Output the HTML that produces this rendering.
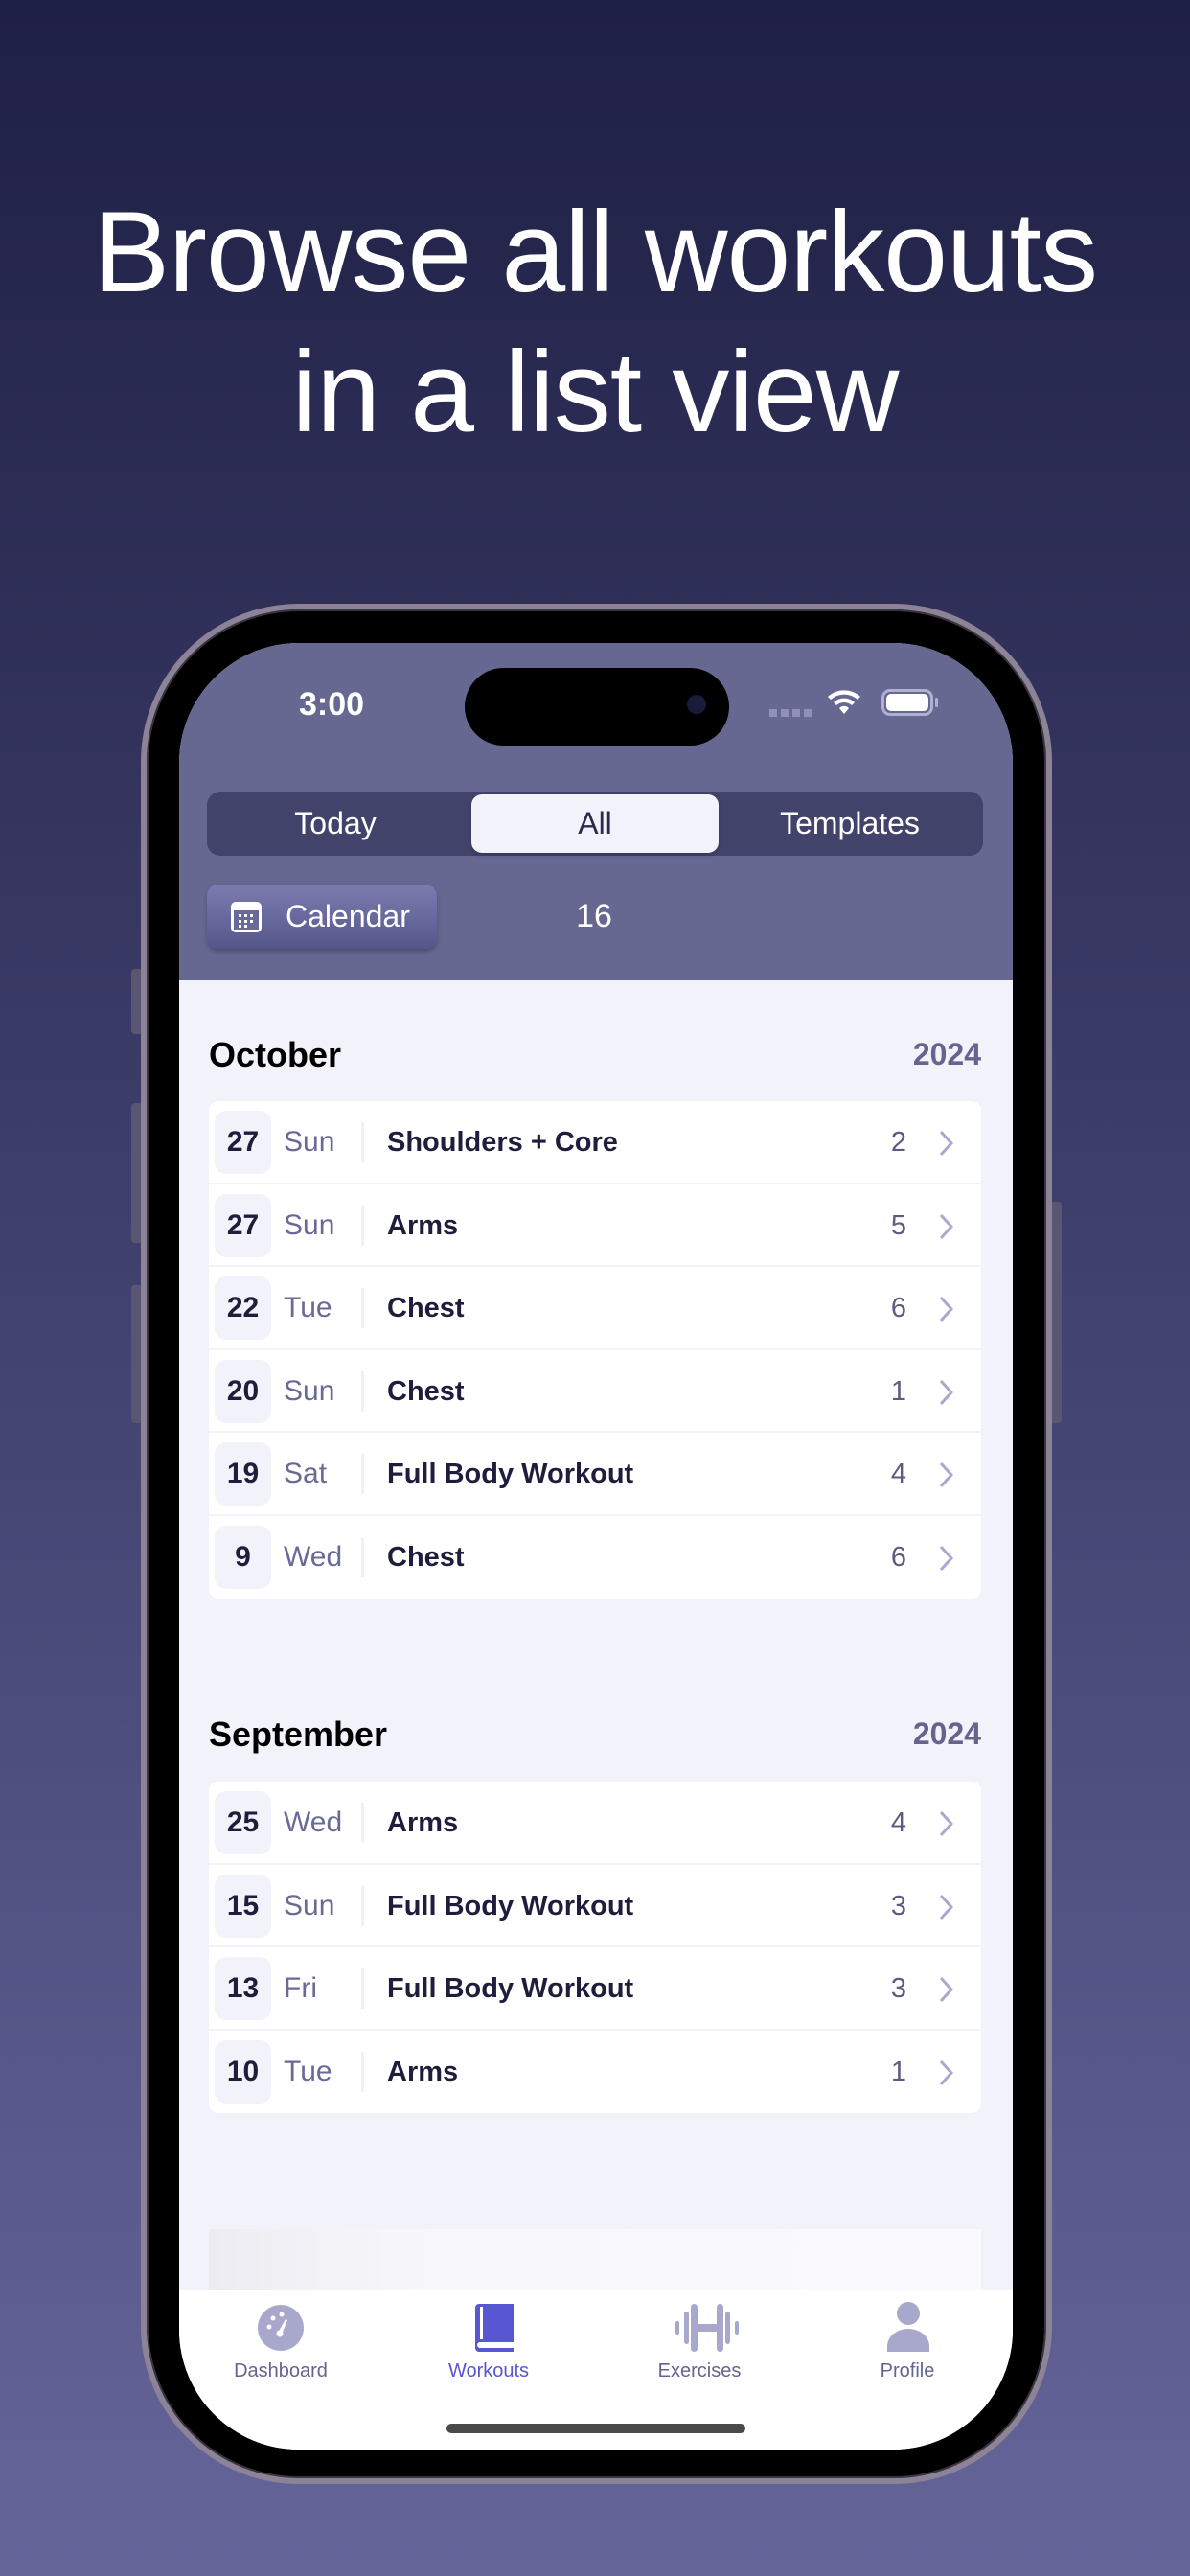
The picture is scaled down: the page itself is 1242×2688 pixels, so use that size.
<!DOCTYPE html>
<html><head><meta charset="utf-8"><style>
*{margin:0;padding:0;box-sizing:border-box}
body{width:1242px;height:2688px;overflow:hidden;background:linear-gradient(#1f2045 0%,#3a3a66 40%,#65659a 100%);font-family:"Liberation Sans",sans-serif;position:relative}
.abs{position:absolute}
h1{position:absolute;left:0;width:1242px;text-align:center;color:#fff;font-weight:500;font-size:120px;line-height:146px;top:190px;letter-spacing:-1px}
.btn{position:absolute;background:#5a5570;border-radius:4px}
.frame{left:147px;top:630px;width:951px;height:1962px;border-radius:165px;background:#000;border:6px solid #8d8396;box-shadow:inset 0 0 0 2px #3a3440}
.screen{left:187px;top:671px;width:870px;height:1885px;border-radius:125px;overflow:hidden;background:#f2f2fb}
.hdr{left:0;top:0;width:870px;height:352px;background:#666892}
.seg{left:29px;top:155px;width:810px;height:67px;border-radius:14px;background:#42436a}
.seg div{position:absolute;top:0;height:67px;line-height:67px;text-align:center;color:#fff;font-size:32px}
.sel{background:#f2f2fb;border-radius:11px;top:3px!important;height:61px!important;line-height:61px!important;color:#2a2a4a!important;box-shadow:0 2px 4px rgba(0,0,0,.2)}
.cal{left:29px;top:252px;width:240px;height:67px;border-radius:12px;background:linear-gradient(#7c7cb0,#55568a);box-shadow:0 3px 5px rgba(0,0,0,.25);color:#fff;font-size:32px;line-height:67px;padding-left:82px}
.mon{font-size:36px;font-weight:bold;color:#000}
.yr{font-size:32px;font-weight:bold;color:#64648f;text-align:right}
.card{left:31px;width:806px;background:#fff;border-radius:10px}
.row{position:relative;height:86.5px;border-bottom:2px solid #f2f2fb}
.row:last-child{border-bottom:none}
.day{position:absolute;left:6px;top:10px;width:59px;height:66px;border-radius:12px;background:#f2f2fb;text-align:center;line-height:66px;font-size:30px;font-weight:600;color:#1e1e3c}
.wd{position:absolute;left:78px;top:0;line-height:86px;font-size:30px;color:#6a6a96}
.dv{position:absolute;left:159px;top:22px;width:3px;height:42px;background:#f0f0f8}
.tt{position:absolute;left:186px;top:0;line-height:86px;font-size:29px;font-weight:bold;color:#1e1e3c}
.ct{position:absolute;right:78px;top:0;line-height:86px;font-size:29px;color:#5c5c80}
.ch{position:absolute;right:28px;top:30px}
.tab{position:absolute;top:1719px;width:870px;height:166px;background:#fff}
.tl{position:absolute;top:73px;font-size:20px;color:#64648f;text-align:center;width:200px}
</style></head><body>
<h1>Browse all workouts<br>in a list view</h1>
<div class="btn" style="left:137px;top:1011px;width:12px;height:68px"></div>
<div class="btn" style="left:137px;top:1151px;width:12px;height:146px"></div>
<div class="btn" style="left:137px;top:1341px;width:12px;height:144px"></div>
<div class="btn" style="left:1096px;top:1254px;width:12px;height:231px"></div>
<div class="abs frame"></div>
<div class="abs screen">
 <div class="abs hdr">
  <div class="abs" style="left:125px;top:45px;font-size:34px;color:#fff;font-weight:600">3:00</div>
  <div class="abs" style="left:298px;top:26px;width:276px;height:81px;border-radius:41px;background:#000"></div>
  <div class="abs" style="left:530px;top:54px;width:20px;height:20px;border-radius:10px;background:#1a1a3a"></div>
  <div class="abs" style="left:616px;top:69px;width:44px;height:8px;background:repeating-linear-gradient(90deg,#9090b8 0 8px,transparent 8px 12px)"></div>
  <svg class="abs" style="left:675px;top:45px" width="38" height="32" viewBox="0 0 38 32"><path d="M2 11a25 25 0 0 1 34 0l-3 3a21 21 0 0 0-28 0z M8 17a16 16 0 0 1 22 0l-3 3a12 12 0 0 0-16 0z M14 23a7 7 0 0 1 10 0l-5 6z" fill="#fff"/></svg>
  <div class="abs" style="left:733px;top:48px;width:54px;height:28px;border-radius:9px;border:3px solid #b0b0d0"><div style="margin:2px;height:18px;border-radius:5px;background:#fff"></div></div>
  <div class="abs" style="left:789px;top:57px;width:3px;height:10px;background:#b0b0d0;border-radius:2px"></div>
  <div class="abs seg">
   <div style="left:0;width:268px">Today</div>
   <div class="sel" style="left:276px;width:258px">All</div>
   <div style="left:542px;width:258px">Templates</div>
  </div>
  <div class="abs cal">Calendar
   <svg class="abs" style="left:24px;top:17px" width="34" height="34" viewBox="0 0 34 34"><rect x="1" y="1" width="32" height="32" rx="5" fill="#fff"/><rect x="4" y="10" width="26" height="20" fill="#6a6a9a"/><g fill="#fff"><rect x="9" y="14" width="3" height="3"/><rect x="15" y="14" width="3" height="3"/><rect x="21" y="14" width="3" height="3"/><rect x="9" y="20" width="3" height="3"/><rect x="15" y="20" width="3" height="3"/><rect x="21" y="20" width="3" height="3"/><rect x="9" y="25" width="3" height="3"/><rect x="15" y="25" width="3" height="3"/></g></svg>
  </div>
  <div class="abs" style="left:383px;top:266px;width:100px;text-align:center;color:#fff;font-size:34px">16</div>
 </div>
 <div class="abs mon" style="left:31px;top:409px">October</div>
 <div class="abs yr" style="left:637px;top:411px;width:200px">2024</div>
 <div class="abs card" style="top:478px">
  <div class="row"><div class="day">27</div><div class="wd">Sun</div><div class="dv"></div><div class="tt">Shoulders + Core</div><div class="ct">2</div><svg class="ch" width="16" height="28"><path d="M2 2l11 12-11 12" stroke="#a8a8d0" stroke-width="3" fill="none"/></svg></div>
  <div class="row"><div class="day">27</div><div class="wd">Sun</div><div class="dv"></div><div class="tt">Arms</div><div class="ct">5</div><svg class="ch" width="16" height="28"><path d="M2 2l11 12-11 12" stroke="#a8a8d0" stroke-width="3" fill="none"/></svg></div>
  <div class="row"><div class="day">22</div><div class="wd">Tue</div><div class="dv"></div><div class="tt">Chest</div><div class="ct">6</div><svg class="ch" width="16" height="28"><path d="M2 2l11 12-11 12" stroke="#a8a8d0" stroke-width="3" fill="none"/></svg></div>
  <div class="row"><div class="day">20</div><div class="wd">Sun</div><div class="dv"></div><div class="tt">Chest</div><div class="ct">1</div><svg class="ch" width="16" height="28"><path d="M2 2l11 12-11 12" stroke="#a8a8d0" stroke-width="3" fill="none"/></svg></div>
  <div class="row"><div class="day">19</div><div class="wd">Sat</div><div class="dv"></div><div class="tt">Full Body Workout</div><div class="ct">4</div><svg class="ch" width="16" height="28"><path d="M2 2l11 12-11 12" stroke="#a8a8d0" stroke-width="3" fill="none"/></svg></div>
  <div class="row"><div class="day">9</div><div class="wd">Wed</div><div class="dv"></div><div class="tt">Chest</div><div class="ct">6</div><svg class="ch" width="16" height="28"><path d="M2 2l11 12-11 12" stroke="#a8a8d0" stroke-width="3" fill="none"/></svg></div>
 </div>
 <div class="abs mon" style="left:31px;top:1118px">September</div>
 <div class="abs yr" style="left:637px;top:1120px;width:200px">2024</div>
 <div class="abs card" style="top:1188px">
  <div class="row"><div class="day">25</div><div class="wd">Wed</div><div class="dv"></div><div class="tt">Arms</div><div class="ct">4</div><svg class="ch" width="16" height="28"><path d="M2 2l11 12-11 12" stroke="#a8a8d0" stroke-width="3" fill="none"/></svg></div>
  <div class="row"><div class="day">15</div><div class="wd">Sun</div><div class="dv"></div><div class="tt">Full Body Workout</div><div class="ct">3</div><svg class="ch" width="16" height="28"><path d="M2 2l11 12-11 12" stroke="#a8a8d0" stroke-width="3" fill="none"/></svg></div>
  <div class="row"><div class="day">13</div><div class="wd">Fri</div><div class="dv"></div><div class="tt">Full Body Workout</div><div class="ct">3</div><svg class="ch" width="16" height="28"><path d="M2 2l11 12-11 12" stroke="#a8a8d0" stroke-width="3" fill="none"/></svg></div>
  <div class="row"><div class="day">10</div><div class="wd">Tue</div><div class="dv"></div><div class="tt">Arms</div><div class="ct">1</div><svg class="ch" width="16" height="28"><path d="M2 2l11 12-11 12" stroke="#a8a8d0" stroke-width="3" fill="none"/></svg></div>
 </div>
 <div class="abs" style="left:31px;top:1655px;width:806px;height:64px;background:linear-gradient(90deg,#ececf2,#f8f8fc 30%,#fafafe)"></div>
 <div class="tab">
  <svg class="abs" style="left:81px;top:14px" width="50" height="50" viewBox="0 0 50 50"><circle cx="25" cy="25" r="24" fill="#a8a8cc"/><circle cx="13" cy="24" r="2.5" fill="#fff"/><circle cx="17" cy="15" r="2.5" fill="#fff"/><circle cx="26" cy="11" r="2.5" fill="#fff"/><path d="M22 30l8-14 2 1-6 15z" fill="#fff"/><circle cx="24" cy="31" r="3.5" fill="#fff"/></svg>
  <div class="tl" style="left:6px">Dashboard</div>
  <svg class="abs" style="left:305px;top:14px" width="48" height="50" viewBox="0 0 48 50"><path d="M4 4a4 4 0 0 1 4-4h36v40H9a3 3 0 0 0 0 6h35v4H8a4 4 0 0 1-4-4z" fill="#5856d0"/><rect x="9" y="3" width="3" height="34" fill="#fff"/></svg>
  <div class="tl" style="left:223px;color:#5856d0">Workouts</div>
  <svg class="abs" style="left:518px;top:14px" width="66" height="50" viewBox="0 0 66 50"><g fill="#a8a8cc"><rect x="0" y="18" width="4" height="14" rx="2"/><rect x="9" y="8" width="5" height="34" rx="2.5"/><rect x="16" y="0" width="7" height="50" rx="3.5"/><rect x="23" y="21" width="20" height="8"/><rect x="43" y="0" width="7" height="50" rx="3.5"/><rect x="52" y="8" width="5" height="34" rx="2.5"/><rect x="62" y="18" width="4" height="14" rx="2"/></g></svg>
  <div class="tl" style="left:443px">Exercises</div>
  <svg class="abs" style="left:737px;top:12px" width="48" height="52" viewBox="0 0 48 52"><circle cx="24" cy="12" r="12" fill="#a8a8cc"/><path d="M2 52v-6a22 18 0 0 1 44 0v6z" fill="#a8a8cc"/></svg>
  <div class="tl" style="left:660px">Profile</div>
  <div class="abs" style="left:279px;top:139px;width:312px;height:10px;border-radius:5px;background:#4a4a4a"></div>
 </div>
</div>
</body></html>
